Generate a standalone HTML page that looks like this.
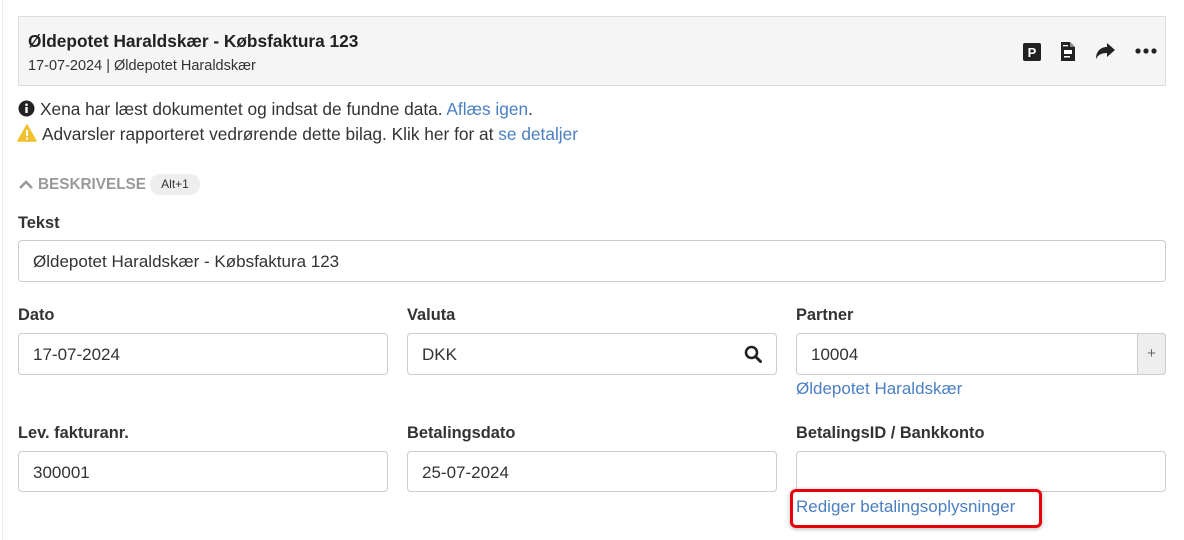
<!DOCTYPE html>
<html><head><meta charset="utf-8"><style>
body{margin:0;width:1184px;height:540px;background:#fff;font-family:"Liberation Sans",sans-serif;color:#333;position:relative;overflow:hidden}
.a{position:absolute}
.hdr{left:18px;top:16px;width:1146px;height:68px;background:#f5f5f5;border:1px solid #ddd}
.lbl{font-weight:bold;font-size:16.4px;color:#333}
.inp{border:1px solid #ccc;border-radius:4px;height:40px;box-sizing:border-box;font-size:17px;padding:11px 14px;color:#333;background:#fff}
.link{color:#4a7fc1;font-size:17px}
</style></head><body>
<div class="a" style="left:2px;top:0;width:1px;height:540px;background:#eee"></div>
<div class="a hdr"></div>
<div class="a" style="left:28px;top:31px;font-size:17.3px;font-weight:bold;color:#222">Øldepotet Haraldskær - Købsfaktura 123</div>
<div class="a" style="left:28px;top:58px;font-size:14.5px;color:#333">17-07-2024 | Øldepotet Haraldskær</div>
<svg class="a" style="left:1022px;top:42px" width="20" height="20" viewBox="0 0 20 20"><rect x="1" y="1" width="18" height="18" rx="2" fill="#222"/><text x="10" y="15" text-anchor="middle" fill="#fff" font-size="13" font-weight="bold" font-family="Liberation Sans">P</text></svg>
<svg class="a" style="left:1060px;top:41px" width="16" height="21" viewBox="0 0 16 21"><path d="M1 1h9l5 5v14H1z" fill="#222"/><path d="M10 1v5h5" fill="#888"/><rect x="4" y="9" width="8" height="4" fill="#fff"/><rect x="4" y="15" width="6" height="1.5" fill="#fff"/><rect x="3" y="4" width="5" height="1.3" fill="#fff"/></svg>
<svg class="a" style="left:1094px;top:42px" width="22" height="18" viewBox="0 0 22 18"><path d="M13 1l8 7-8 7v-4C7 11 4 13 2 17 2 10 6 5 13 5z" fill="#222"/></svg>
<svg class="a" style="left:1135px;top:48px" width="22" height="6"><circle cx="3" cy="3" r="2.6" fill="#222"/><circle cx="11" cy="3" r="2.6" fill="#222"/><circle cx="19" cy="3" r="2.6" fill="#222"/></svg>
<svg class="a" style="left:18px;top:100px" width="17" height="17"><circle cx="8.5" cy="8.5" r="8" fill="#222"/><rect x="7.3" y="7" width="2.4" height="6" fill="#fff"/><circle cx="8.5" cy="4.7" r="1.3" fill="#fff"/></svg>
<div class="a" style="left:40px;top:99px;font-size:17.3px">Xena har læst dokumentet og indsat de fundne data. <span class="link" style="font-size:17.3px">Aflæs igen</span>.</div>
<svg class="a" style="left:17px;top:124px" width="20" height="18"><path d="M10 1L19 17H1z" fill="#f0c030" stroke="#f0c030" stroke-linejoin="round" stroke-width="1.5"/><rect x="9" y="6" width="2" height="6" fill="#fff"/><rect x="9" y="13.5" width="2" height="2" fill="#fff"/></svg>
<div class="a" style="left:42px;top:124px;font-size:17.3px">Advarsler rapporteret vedrørende dette bilag. Klik her for at <span class="link" style="font-size:17.3px">se detaljer</span></div>
<svg class="a" style="left:18px;top:178px" width="16" height="12"><path d="M2 10l6-6 6 6" stroke="#999" stroke-width="2.6" fill="none"/></svg>
<div class="a" style="left:38px;top:176px;font-size:15.3px;font-weight:bold;color:#999">BESKRIVELSE</div>
<div class="a" style="left:150px;top:174px;width:50px;height:21px;border-radius:10px;background:#eee;font-size:12px;text-align:center;line-height:21px;color:#333">Alt+1</div>
<div class="a lbl" style="left:18px;top:214px">Tekst</div>
<div class="a inp" style="left:18px;top:240px;width:1148px;height:42px">Øldepotet Haraldskær - Købsfaktura 123</div>
<div class="a lbl" style="left:18px;top:306px">Dato</div>
<div class="a lbl" style="left:407px;top:306px">Valuta</div>
<div class="a lbl" style="left:796px;top:306px">Partner</div>
<div class="a inp" style="left:18px;top:333px;width:370px;height:42px">17-07-2024</div>
<div class="a inp" style="left:407px;top:333px;width:370px;height:42px">DKK</div>
<svg class="a" style="left:744px;top:345px" width="18" height="18"><circle cx="7.5" cy="7.5" r="5.5" stroke="#222" stroke-width="2.6" fill="none"/><path d="M11.5 11.5l5 5" stroke="#222" stroke-width="3" stroke-linecap="round"/></svg>
<div class="a inp" style="left:796px;top:333px;width:370px;height:42px">10004</div>
<div class="a" style="left:1137px;top:333px;width:29px;height:42px;background:#eee;border:1px solid #ccc;border-radius:0 4px 4px 0;box-sizing:border-box;text-align:center;line-height:40px;color:#666;font-size:15px">+</div>
<div class="a link" style="left:796px;top:379px">Øldepotet Haraldskær</div>
<div class="a lbl" style="left:18px;top:424px">Lev. fakturanr.</div>
<div class="a lbl" style="left:407px;top:424px">Betalingsdato</div>
<div class="a lbl" style="left:796px;top:424px">BetalingsID / Bankkonto</div>
<div class="a inp" style="left:18px;top:451px;width:370px;height:41px">300001</div>
<div class="a inp" style="left:407px;top:451px;width:370px;height:41px">25-07-2024</div>
<div class="a inp" style="left:796px;top:451px;width:370px;height:41px"></div>
<div class="a" style="left:790px;top:489px;width:252px;height:39px;border:3px solid #e8000b;border-radius:6px;box-sizing:border-box;box-shadow:0 1px 4px rgba(0,0,0,.3)"></div>
<div class="a link" style="left:796px;top:497px">Rediger betalingsoplysninger</div>
</body></html>
